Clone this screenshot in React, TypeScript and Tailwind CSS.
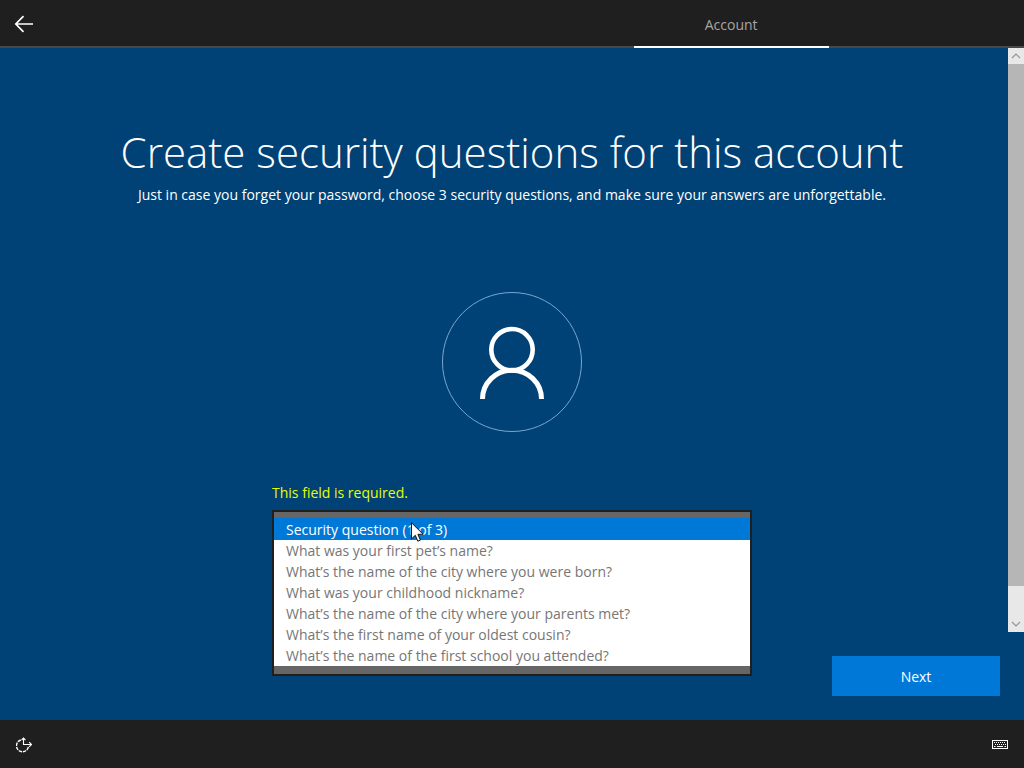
import { useState } from 'react';

const questions = [
  'Security question (1 of 3)',
  'What was your first pet’s name?',
  'What’s the name of the city where you were born?',
  'What was your childhood nickname?',
  'What’s the name of the city where your parents met?',
  'What’s the first name of your oldest cousin?',
  'What’s the name of the first school you attended?',
];

function Header() {
  return (
    <header className="flex h-12 bg-[#1f1f1f]">
      <button type="button" aria-label="Back" className="flex w-12 shrink-0 items-center justify-center border-b-2 border-[#484848] pt-0.5">
        <svg viewBox="0 0 20 20" className="size-5" fill="none" stroke="#fff" strokeWidth="1.7">
          <path d="M19 10H2M9.5 2.2L1.8 10l7.7 7.8" />
        </svg>
      </button>
      <nav className="grid flex-1 grid-cols-5">
        <div className="col-span-3 border-b-2 border-[#484848]" />
        <a href="#account" aria-current="page" className="flex items-center justify-center border-b-2 border-white pt-1 text-[#a6a6a6]">
          Account
        </a>
        <div className="border-b-2 border-[#484848]" />
      </nav>
    </header>
  );
}

function Scrollbar() {
  return (
    <div className="flex w-4 shrink-0 flex-col bg-[#e8e8e8]">
      <button type="button" aria-label="Scroll up" className="flex h-4 items-center justify-center">
        <svg viewBox="0 0 10 10" className="size-2.5" fill="none" stroke="#959595" strokeWidth="1.2">
          <path d="M1 7l4-4 4 4" />
        </svg>
      </button>
      <div className="flex-1">
        <div className="h-[94.5%] bg-[#b6b6b6]" />
      </div>
      <button type="button" aria-label="Scroll down" className="flex h-4 items-center justify-center">
        <svg viewBox="0 0 10 10" className="size-2.5" fill="none" stroke="#959595" strokeWidth="1.2">
          <path d="M1 3l4 4 4-4" />
        </svg>
      </button>
    </div>
  );
}

function Footer() {
  return (
    <footer className="flex h-12 items-center justify-between bg-[#1f1f1f] px-4 pt-0.5">
      <button type="button" aria-label="Ease of Access">
        <svg viewBox="0 0 16 16" className="size-4" fill="none" stroke="#fff">
          <path d="M7.5 1.2v6.3h8M5.6 3l1.9-1.9L9.4 3M13.2 5.2l2.3 2.3-2.3 2.3" strokeWidth="1.1" />
          <path d="M4.8 3A6 6 0 1 0 12.4 9.8" strokeWidth="1.4" strokeDasharray="3.4 0.9" />
        </svg>
      </button>
      <button type="button" aria-label="On-screen keyboard">
        <svg viewBox="0 0 16 10" className="h-2.5 w-4" fill="none" stroke="#fff">
          <rect x="0.5" y="0.5" width="15" height="8" />
          <path d="M2 2.5h12M3 4.5h11" strokeDasharray="1 1" />
          <path d="M2 6.5h1.5M5 6.5h6M12.5 6.5H14" />
        </svg>
      </button>
    </footer>
  );
}

export default function App() {
  const [question, setQuestion] = useState(questions[0]);

  return (
    <div className="flex min-h-screen flex-col bg-[#004275] font-['Open_Sans','Noto_Sans',sans-serif] text-sm text-white">
      <Header />

      <main className="flex flex-1 flex-col">
        <div className="flex flex-1">
          <div className="flex flex-1 flex-col items-center pt-[74px] pl-4">
            <h1 className="text-center text-[42px] leading-[60px] font-light">Create security questions for this account</h1>
            <p className="pt-0.5 text-center leading-[22px]">
              Just in case you forget your password, choose 3 security questions, and make sure your answers are unforgettable.
            </p>

            {/* Account avatar */}
            <svg viewBox="0 0 140 140" className="mt-[86px] size-[140px]" fill="none" stroke="#fff">
              <circle cx="70" cy="70" r="69.5" stroke="#78a6cf" />
              <circle cx="70" cy="57.7" r="20.7" strokeWidth="4.6" />
              <path d="M40.5 107a29.5 28.8 0 0 1 59 0" strokeWidth="5" />
            </svg>

            <div className="flex w-[480px] flex-col pt-[50px]">
              <label htmlFor="question" className="pb-1.5 leading-[22px] text-[#e6ff00]">
                This field is required.
              </label>
              {/* The open list hangs over whatever is below the field */}
              <div className="relative h-8">
                <select
                  id="question"
                  size={7}
                  value={question}
                  onChange={(e) => setQuestion(e.target.value)}
                  className="absolute inset-x-0 top-0 h-[166px] overflow-hidden border-2 border-[#1f1f1f] bg-[#666] pt-1.5 outline-none"
                >
                  {questions.map((q) => (
                    <option
                      key={q}
                      value={q}
                      className="h-[21px] bg-white px-3 pt-px pb-0 leading-5 text-[#767676] checked:h-[22px] checked:bg-[#0078d7] checked:bg-linear-to-r checked:from-[#0078d7] checked:to-[#0078d7] checked:pt-0.5 checked:text-white"
                    >
                      {q}
                    </option>
                  ))}
                </select>
                {/* Pointer */}
                <svg viewBox="0 0 13 20" className="pointer-events-none absolute top-3 left-[139px] h-5 w-[13px]">
                  <path d="M0.5 0.8v16l3.8-3.5 2.5 5.9 2.6-1.1-2.5-5.8h5.3z" fill="#fff" stroke="#111" />
                </svg>
              </div>
            </div>
          </div>
          <Scrollbar />
        </div>

        <div className="flex h-[88px] shrink-0 items-center justify-end px-6">
          <button type="button" className="h-10 w-[168px] bg-[#0078d7] pt-0.5">
            Next
          </button>
        </div>
      </main>

      <Footer />
    </div>
  );
}
